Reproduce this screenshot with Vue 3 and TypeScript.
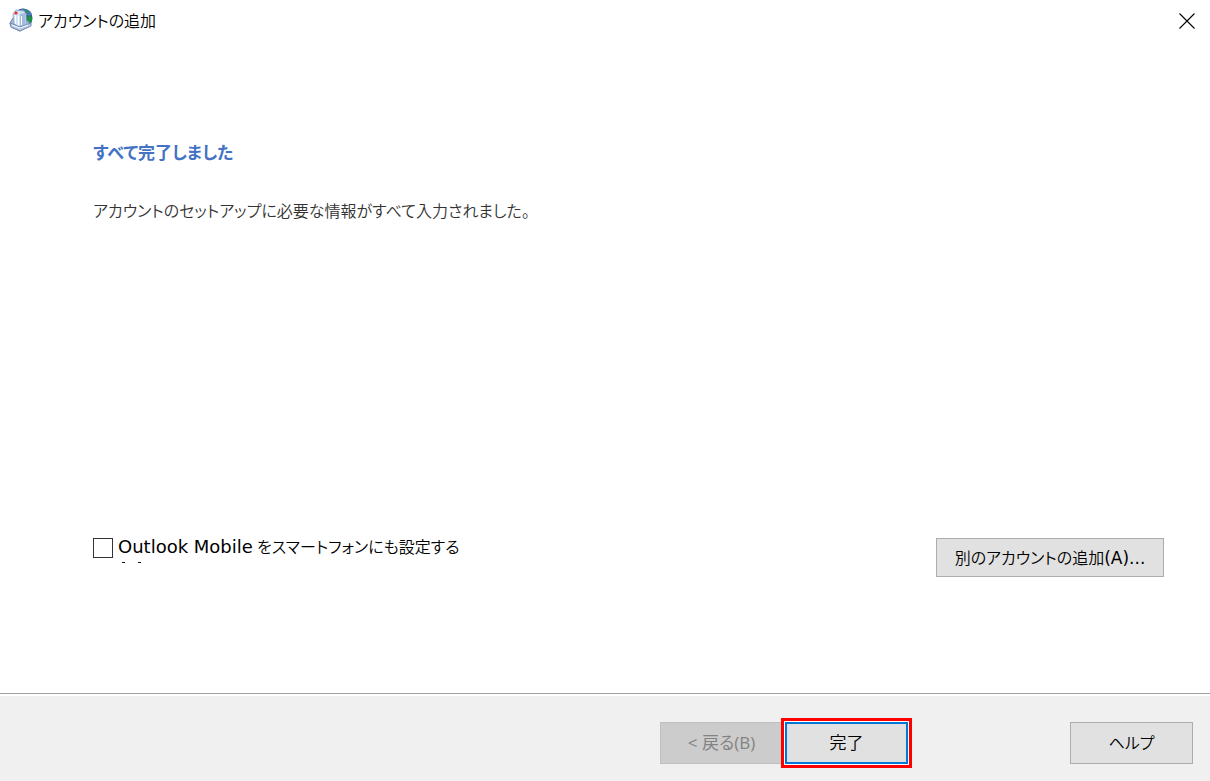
<script setup lang="ts">
import { ref } from 'vue'

const setupMobile = ref<boolean>(false)
</script>

<template>
  <div class="dialog">
    <header class="titlebar">
      <svg class="app-icon" viewBox="0 0 24 24" aria-hidden="true">
        <circle cx="14" cy="10" r="9.500" fill="#2f4f94" />
        <path d="M12 1c5-1 9 1 11 5l-2 2-4-1-3-3z" fill="#4f7cc0" />
        <path d="M17 10l3-3 3 2c.5 4-.5 6-3 8l-3-1z" fill="#1f8f48" />
        <path d="M15 1l4 2 1 3-4-1z" fill="#2f8a5c" />
        <path d="M1 15l3-5 15 3 3 4-11 6-9-4z" fill="#9fb6d8" stroke="#7288b0" />
        <path d="M4 6l3-4 8 1 2 3v11l-5 3-7-4z" fill="#d3e2f4" stroke="#93acd0" />
        <path d="M11 6l5-1v12l-5 3z" fill="#a2bcde" />
        <path d="M6.500 7v9M9.500 8v9M12.500 8v9" stroke="#fff" />
        <path d="M1 15l10 4 11-4v3l-11 5-9-4z" fill="#b9cbe5" stroke="#7189b4" />
        <path d="M3 17l8 3 8-3" fill="none" stroke="#f5f9ff" />
        <circle cx="7" cy="5" r="1.600" fill="#f02818" />
      </svg>
      <h1 class="title">アカウントの追加</h1>
      <button class="close" type="button" aria-label="閉じる">
        <svg viewBox="0 0 16 16" aria-hidden="true">
          <path d="M.5.5l15 15M15.500.5l-15 15" fill="none" stroke="#000" stroke-width="1.100" />
        </svg>
      </button>
    </header>

    <main class="content">
      <h2 class="heading">すべて完了しました</h2>
      <p class="message">アカウントのセットアップに必要な情報がすべて入力されました。</p>
      <div class="options">
        <div class="option">
          <label class="check" for="mobile">
            <input id="mobile" v-model="setupMobile" type="checkbox" />
            <span><span class="latin">Outlook Mobile</span> をスマートフォンにも設定する</span>
          </label>
          <svg class="clipped" viewBox="0 0 22 1" aria-hidden="true">
            <path d="M1 .5h3M17 .5h3" stroke="#111" />
          </svg>
        </div>
        <button class="btn add" type="button">別のアカウントの追加<span class="latin">(A)...</span></button>
      </div>
    </main>

    <footer class="footer">
      <button class="btn back" type="button" disabled>&lt; 戻る(B)</button>
      <button class="btn finish" type="button">完了</button>
      <button class="btn help" type="button">ヘルプ</button>
    </footer>
  </div>
</template>

<style>
body {
  margin: 0;
  background: #fff;
}
</style>

<style scoped>
.dialog {
  box-sizing: border-box;
  min-height: 100vh;
  display: flex;
  flex-direction: column;
  background: #fff;
  color: #000;
  font-family: "Open Sans", "Noto Sans CJK JP", sans-serif;
  font-size: 16px;
  font-weight: 350;
  line-height: 24px;
  font-feature-settings: "palt";
}
.titlebar {
  display: flex;
  align-items: center;
  height: 40px;
  padding: 1px 15px 0 9px;
}
.app-icon {
  width: 24px;
  height: 24px;
  margin: 0 5px 2px 0;
}
.title {
  flex: 1;
  margin: 0;
  font-size: 16px;
  font-weight: 350;
}
.close {
  width: 16px;
  height: 16px;
  padding: 0;
  border: 0;
  background: none;
}
.close svg {
  display: block;
  width: 16px;
  height: 16px;
}
.content {
  flex: 1;
  display: flex;
  flex-direction: column;
  padding: 100px 46px 116px 93px;
}
.heading {
  margin: 0;
  color: #4472c4;
  font-size: 17px;
  font-weight: 700;
}
.message {
  margin: 34px 0 0;
  color: #333;
}
.options {
  display: flex;
  justify-content: space-between;
  align-items: flex-start;
  margin-top: auto;
}
.check {
  display: flex;
  align-items: center;
  gap: 5px;
  height: 20px;
}
.check input {
  appearance: none;
  box-sizing: border-box;
  width: 20px;
  height: 20px;
  margin: 0;
  border: 1px solid #333;
  background: #fff;
}
.check input:checked {
  box-shadow: inset 0 0 0 4px #fff;
  background: #333;
}
.check > span {
  padding-bottom: 2px;
}
.latin {
  font-family: "DejaVu Sans", sans-serif;
  font-size: 17px;
  font-weight: 400;
}
.check .latin {
  font-size: 18px;
}
.clipped {
  display: block;
  width: 22px;
  height: 1px;
  margin: 4px 0 0 28px;
}
.btn {
  box-sizing: border-box;
  flex: none;
  width: 123px;
  height: 42px;
  padding: 0;
  border: 1px solid #adadad;
  border-radius: 0;
  background: #e1e1e1;
  color: #000;
  font: inherit;
  font-feature-settings: "palt";
}
.add {
  width: 228px;
  height: 39px;
}
.footer {
  box-sizing: border-box;
  display: flex;
  align-items: center;
  height: 88px;
  padding: 11px 17px 0;
  border-top: 1px solid #a0a0a0;
  background: #f0f0f0;
  box-shadow: inset 0 2px #fff;
}
.back {
  margin-left: auto;
  border-color: #bfbfbf;
  background: #ccc;
  color: #838383;
  font-size: 17px;
  font-weight: 400;
}
.finish {
  margin: 0 162px 0 2px;
  border: 2px solid #0078d7;
  box-shadow: 0 0 0 1px #fff, 0 0 0 4px #f00;
  font-size: 17px;
}
</style>
